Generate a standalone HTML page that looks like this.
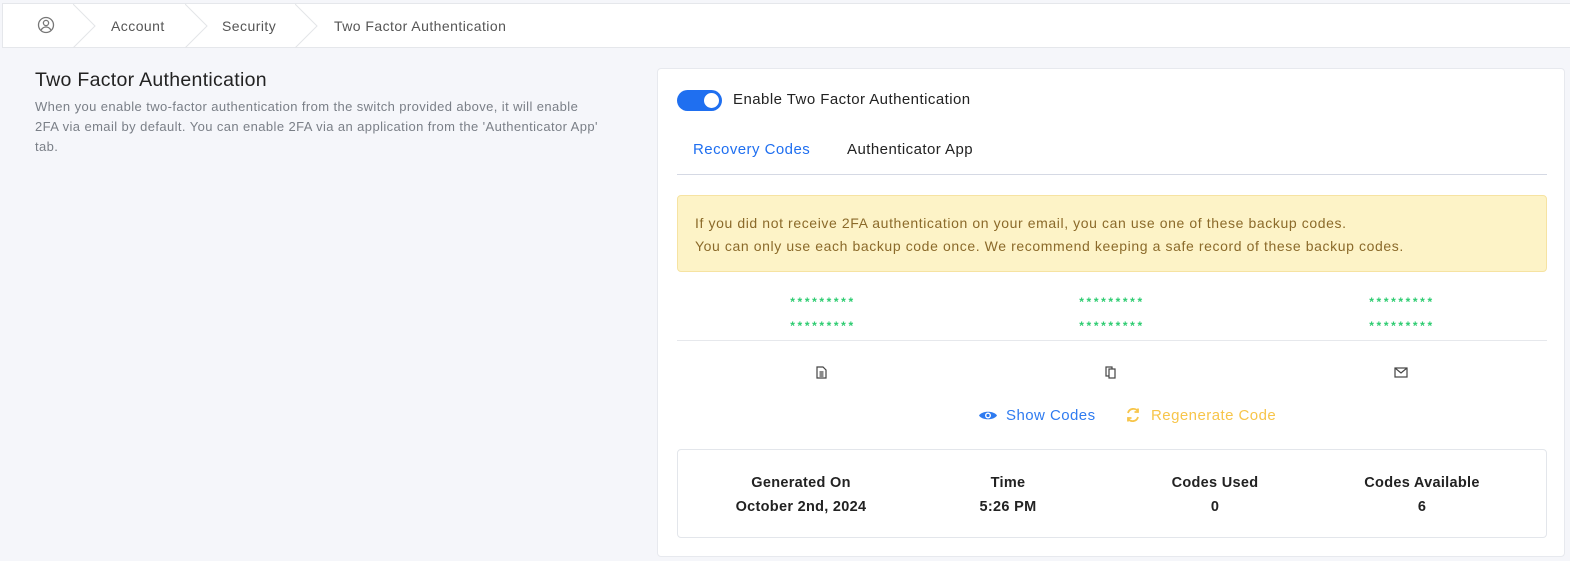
<!DOCTYPE html>
<html><head><style>
*{box-sizing:border-box;margin:0;padding:0}
body{width:1570px;height:561px;background:#f5f6fa;font-family:"Liberation Sans",sans-serif;color:#212529;position:relative;overflow:hidden;letter-spacing:0.45px}
.hdr{position:absolute;left:2px;top:3px;width:1568px;height:45px;background:#fff;border:1px solid #e5e7eb;border-right:none}
.bc{position:absolute;top:14px;font-size:14px;color:#555}
.chev{position:absolute;top:0;width:24px;height:44px}
.ttl{position:absolute;left:35px;top:69px;font-size:19.5px;color:#222;letter-spacing:0.3px}
.desc{position:absolute;left:35px;top:97px;width:640px;font-size:13px;line-height:20px;color:#7a7f87;letter-spacing:0.4px;white-space:nowrap}
.card{position:absolute;left:657px;top:68px;width:908px;height:489px;background:#fff;border:1px solid #e7e9ee;border-radius:4px}
.abs{position:absolute}
.code{position:absolute;font-size:12px;color:#2ecc71;font-weight:bold;letter-spacing:2.6px;width:140px;text-align:center}
.st{position:absolute;width:200px;text-align:center;font-size:14.5px;font-weight:bold;color:#222;line-height:24px;letter-spacing:0.3px}
</style></head><body>
<div class="hdr">
 <svg class="abs" style="left:34px;top:12px" width="18" height="18" viewBox="0 0 18 18" fill="none" stroke="#777" stroke-width="1.3"><circle cx="9" cy="9" r="7.5"/><circle cx="9" cy="7" r="2.6"/><path d="M4.2 14c1.2-2.2 3-3 4.8-3s3.6.8 4.8 3"/></svg>
 <svg class="chev" style="left:70px" viewBox="0 0 24 44"><path d="M0 0 L22 22 L0 44" fill="none" stroke="#e3e5e8"/></svg>
 <div class="bc" style="left:108px">Account</div>
 <svg class="chev" style="left:182px" viewBox="0 0 24 44"><path d="M0 0 L22 22 L0 44" fill="none" stroke="#e3e5e8"/></svg>
 <div class="bc" style="left:219px">Security</div>
 <svg class="chev" style="left:292px" viewBox="0 0 24 44"><path d="M0 0 L22 22 L0 44" fill="none" stroke="#e3e5e8"/></svg>
 <div class="bc" style="left:331px">Two Factor Authentication</div>
</div>
<div class="ttl">Two Factor Authentication</div>
<div class="desc">When you enable two-factor authentication from the switch provided above, it will enable<br>2FA via email by default. You can enable 2FA via an application from the 'Authenticator App'<br>tab.</div>
<div class="card">
 <div class="abs" style="left:19px;top:21px;width:45px;height:21px;border-radius:11px;background:#1f6ff0"></div>
 <div class="abs" style="left:46px;top:24px;width:15px;height:15px;border-radius:50%;background:#fff"></div>
 <div class="abs" style="left:75px;top:22px;font-size:15px;color:#222">Enable Two Factor Authentication</div>
 <div class="abs" style="left:35px;top:72px;font-size:15px;color:#1f6ff0">Recovery Codes</div>
 <div class="abs" style="left:189px;top:72px;font-size:15px;color:#222">Authenticator App</div>
 <div class="abs" style="left:19px;top:105px;width:870px;height:1px;background:#d5d9e4"></div>
 <div class="abs" style="left:19px;top:126px;width:870px;height:77px;background:#fdf3c7;border:1px solid #f6e3a2;border-radius:4px;padding:16px 17px;font-size:14px;line-height:23px;color:#8b6a2a;letter-spacing:0.6px">If you did not receive 2FA authentication on your email, you can use one of these backup codes.<br>You can only use each backup code once. We recommend keeping a safe record of these backup codes.</div>
 <div class="code" style="left:95px;top:226px">*********</div><div class="code" style="left:95px;top:250px">*********</div>
 <div class="code" style="left:384px;top:226px">*********</div><div class="code" style="left:384px;top:250px">*********</div>
 <div class="code" style="left:674px;top:226px">*********</div><div class="code" style="left:674px;top:250px">*********</div>
 <div class="abs" style="left:19px;top:271px;width:870px;height:1px;background:#e6e8ec"></div>
 <svg class="abs" style="left:158px;top:297px" width="11" height="13" viewBox="0 0 11 13" fill="none" stroke="#444" stroke-width="1.2"><path d="M1 1h6l3 3v8H1z"/><path d="M3.5 6h4M3.5 8h4M3.5 10h4"/></svg>
 <svg class="abs" style="left:447px;top:297px" width="12" height="13" viewBox="0 0 12 13" fill="none" stroke="#444" stroke-width="1.2"><rect x="1" y="1" width="6" height="9"/><rect x="4" y="3" width="6" height="9" fill="#fff"/></svg>
 <svg class="abs" style="left:736px;top:298px" width="14" height="11" viewBox="0 0 14 11" fill="none" stroke="#444" stroke-width="1.2"><rect x="1" y="1" width="12" height="9"/><path d="M1 1l6 5 6-5"/></svg>
 <svg class="abs" style="left:320px;top:340px" width="20" height="13" viewBox="0 0 20 13"><path d="M1 6.5C4 1.5 16 1.5 19 6.5 16 11.5 4 11.5 1 6.5z" fill="#2f7bf0"/><circle cx="10" cy="6.5" r="3" fill="#fff"/><circle cx="10" cy="6.5" r="1.6" fill="#2f7bf0"/></svg>
 <div class="abs" style="left:348px;top:338px;font-size:15px;color:#2f7bf0">Show Codes</div>
 <svg class="abs" style="left:467px;top:338px" width="16" height="16" viewBox="0 0 16 16" fill="none" stroke="#f7c54a" stroke-width="1.8"><path d="M3 6a5.5 5.5 0 0 1 10-1.5M13 10a5.5 5.5 0 0 1-10 1.5"/><path d="M13 1.5v3.5h-3.5M3 14.5V11h3.5"/></svg>
 <div class="abs" style="left:493px;top:338px;font-size:15px;color:#f7c54a">Regenerate Code</div>
 <div class="abs" style="left:19px;top:380px;width:870px;height:89px;border:1px solid #e3e6eb;border-radius:4px"></div>
 <div class="st" style="left:43px;top:402px">Generated On<br>October 2nd, 2024</div>
 <div class="st" style="left:250px;top:402px">Time<br>5:26 PM</div>
 <div class="st" style="left:457px;top:402px">Codes Used<br>0</div>
 <div class="st" style="left:664px;top:402px">Codes Available<br>6</div>
</div>
</body></html>
